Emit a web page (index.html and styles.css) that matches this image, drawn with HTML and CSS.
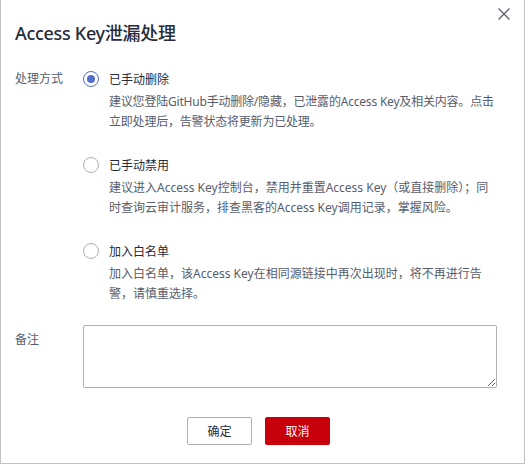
FILE: index.html
```html
<!DOCTYPE html>
<html lang="zh-CN">
<head>
<meta charset="utf-8">
<link rel="stylesheet" href="styles.css">
</head>
<body>
<div class="dialog">
  <button class="close" aria-label="关闭">
    <svg width="14" height="14" viewBox="0 0 14 14"><path d="M1.5 1.5 L12.5 12.5 M12.5 1.5 L1.5 12.5" stroke="#5e6370" stroke-width="1.4" fill="none"/></svg>
  </button>
  <h1 class="title">Access Key泄漏处理</h1>
  <div class="form">
    <div class="row">
      <div class="label label-top">处理方式</div>
      <div class="options">
        <div class="option">
          <div class="opt-head"><span class="radio checked"></span><span class="opt-name">已手动删除</span></div>
          <p class="desc tight">建议您登陆GitHub手动删除/隐藏，已泄露的Access Key及相关内容。点击立即处理后，告警状态将更新为已处理。</p>
        </div>
        <div class="option">
          <div class="opt-head"><span class="radio"></span><span class="opt-name">已手动禁用</span></div>
          <p class="desc">建议进入Access Key控制台，禁用并重置Access Key（或直接删除）；同时查询云审计服务，排查黑客的Access Key调用记录，掌握风险。</p>
        </div>
        <div class="option">
          <div class="opt-head"><span class="radio"></span><span class="opt-name">加入白名单</span></div>
          <p class="desc">加入白名单，该Access Key在相同源链接中再次出现时，将不再进行告警，请慎重选择。</p>
        </div>
      </div>
    </div>
    <div class="row row-remark">
      <div class="label label-remark">备注</div>
      <textarea class="remark"></textarea>
    </div>
  </div>
  <div class="actions">
    <button class="btn">确定</button>
    <button class="btn btn-primary">取消</button>
  </div>
</div>
</body>
</html>
```
FILE: styles.css
```css
* { box-sizing: border-box; }
html, body { margin: 0; padding: 0; background: #fff; }
body {
  font-family: "Noto Sans", "Noto Sans CJK SC", sans-serif;
  color: #252b3a;
}
.dialog {
  position: relative;
  width: 525px;
  height: 464px;
  border: 1px solid #c2c2c2;
  border-top: none;
  background: #fff;
}
.close {
  position: absolute;
  top: 7px;
  right: 13px;
  width: 14px;
  height: 14px;
  padding: 0;
  border: none;
  background: none;
  display: flex;
}
.title {
  margin: 0;
  padding: 21px 0 0 14px;
  font-size: 18px;
  line-height: 24px;
  font-weight: 500;
  color: #252b3a;
  letter-spacing: -0.3px;
}
.form {
  padding: 24px 0 0 14px;
}
.row {
  display: flex;
}
.label {
  width: 68px;
  flex: none;
  font-size: 12px;
  line-height: 20px;
  color: #575d6c;
}
.options {
  display: flex;
  flex-direction: column;
  gap: 22px;
  width: 414px;
}
.option:nth-child(n+2) .opt-head { margin-top: 1px; }
.opt-head {
  display: flex;
  align-items: center;
  height: 20px;
  gap: 10px;
}
.radio {
  width: 16px;
  height: 16px;
  border-radius: 50%;
  border: 1px solid #adb0b8;
  display: flex;
  align-items: center;
  justify-content: center;
  flex: none;
}
.radio.checked { border-color: #526ecc; }
.radio.checked::after {
  content: "";
  width: 8px;
  height: 8px;
  border-radius: 50%;
  background: #526ecc;
}
.opt-name {
  font-size: 12px;
  color: #252b3a;
}
.desc {
  margin: 3px 0 0 26px;
  font-size: 12px;
  line-height: 20px;
  color: #575d6c;
}
.desc.tight { letter-spacing: -0.2px; }
.row-remark {
  margin-top: 21px;
}
.label-remark {
  padding-top: 5px;
}
.remark {
  width: 414px;
  height: 63px;
  border: 1px solid #adb0b8;
  border-radius: 2px;
  resize: vertical;
  font-family: inherit;
  margin: 0;
}
.actions {
  display: flex;
  justify-content: center;
  gap: 13px;
  padding-top: 29px;
  padding-right: 8px;
}
.btn {
  width: 65px;
  height: 28px;
  border: 1px solid #adb0b8;
  border-radius: 2px;
  background: #fff;
  color: #252b3a;
  font-family: inherit;
  font-size: 12px;
  padding: 0;
}
.btn-primary {
  background: #c7000b;
  border-color: #c7000b;
  color: #fff;
}
```
